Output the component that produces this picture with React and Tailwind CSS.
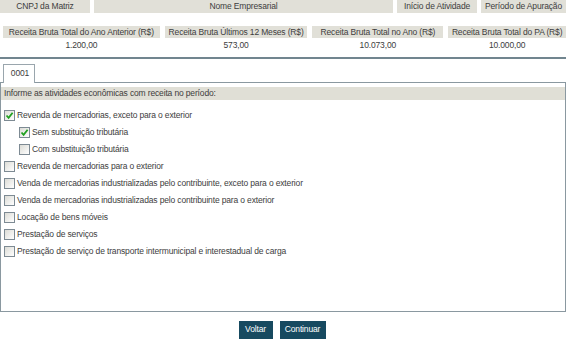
import React from "react";

function Box({ checked }) {
  return (
    <span className="inline-flex h-[11px] w-[11px] shrink-0 items-center justify-center border border-[#7d8a93] bg-gradient-to-br from-[#dcdcd6] to-[#ffffff]">
      {checked && (
        <svg width="9" height="9" viewBox="0 0 9 9">
          <path d="M1.5 4.5 L3.6 6.8 L7.6 1.8" fill="none" stroke="#21a121" strokeWidth="1.8" />
        </svg>
      )}
    </span>
  );
}

function Item({ checked, indent, children }) {
  return (
    <div className={"flex h-[17px] items-center gap-[2px] " + (indent ? "pl-[18px]" : "pl-[3px]")}>
      <Box checked={checked} />
      <span>{children}</span>
    </div>
  );
}

export default function App() {
  const font = { fontFamily: "'Liberation Sans', Arial, sans-serif" };
  return (
    <div className="relative h-[343px] w-[566px] overflow-hidden bg-white text-[8.5px] leading-none tracking-[-0.15px] text-[#3d3d3d]" style={font}>
      <div className="flex h-[13px] gap-[4px]">
        <div className="flex w-[90px] items-center justify-center bg-[#e1e0d8]">CNPJ da Matriz</div>
        <div className="flex w-[299px] items-center justify-center bg-[#e1e0d8]">Nome Empresarial</div>
        <div className="flex w-[80px] items-center justify-center bg-[#e1e0d8]">Início de Atividade</div>
        <div className="flex w-[85px] items-center justify-center bg-[#e1e0d8]">Período de Apuração</div>
      </div>
      <div className="mt-[13px] flex gap-[5px] pl-[3px]">
        <div className="flex w-[157px] flex-col items-center">
          <div className="flex h-[12px] w-full items-center justify-center bg-[#e1e0d8]">Receita Bruta Total do Ano Anterior (R$)</div>
          <div className="mt-[3px]">1.200,00</div>
        </div>
        <div className="flex w-[143px] flex-col items-center">
          <div className="flex h-[12px] w-full items-center justify-center bg-[#e1e0d8]">Receita Bruta Últimos 12 Meses (R$)</div>
          <div className="mt-[3px]">573,00</div>
        </div>
        <div className="flex w-[131px] flex-col items-center">
          <div className="flex h-[12px] w-full items-center justify-center bg-[#e1e0d8]">Receita Bruta Total no Ano (R$)</div>
          <div className="mt-[3px]">10.073,00</div>
        </div>
        <div className="flex w-[118px] flex-col items-center">
          <div className="flex h-[12px] w-full items-center justify-center bg-[#e1e0d8]">Receita Bruta Total do PA (R$)</div>
          <div className="mt-[3px]">10.000,00</div>
        </div>
      </div>
      <div className="mt-[7px] h-[2px] bg-[#71858f]" />
      <div className="mt-[5px] flex pl-[3px]">
        <div className="relative z-10 -mb-px flex h-[19px] w-[32px] items-center justify-center border border-b-0 border-[#9aa6ad] bg-white pl-[2px]">0001</div>
      </div>
      <div className="flex h-[230px] flex-col border border-[#8a98a0] bg-white">
        <div className="mt-[4px] flex h-[13px] items-center bg-[#e0dfd6] pl-[3px]">Informe as atividades econômicas com receita no período:</div>
        <div className="mt-[7px] flex flex-col">
          <Item checked>Revenda de mercadorias, exceto para o exterior</Item>
          <Item checked indent>Sem substituição tributária</Item>
          <Item indent>Com substituição tributária</Item>
          <Item>Revenda de mercadorias para o exterior</Item>
          <Item>Venda de mercadorias industrializadas pelo contribuinte, exceto para o exterior</Item>
          <Item>Venda de mercadorias industrializadas pelo contribuinte para o exterior</Item>
          <Item>Locação de bens móveis</Item>
          <Item>Prestação de serviços</Item>
          <Item>Prestação de serviço de transporte intermunicipal e interestadual de carga</Item>
        </div>
      </div>
      <div className="mt-[9px] flex justify-center gap-[7px] pr-[2px]">
        <button className="h-[18px] w-[34px] bg-[#174a60] text-[8.5px] text-white" style={font}>Voltar</button>
        <button className="h-[18px] w-[46px] bg-[#174a60] text-[8.5px] text-white" style={font}>Continuar</button>
      </div>
    </div>
  );
}
